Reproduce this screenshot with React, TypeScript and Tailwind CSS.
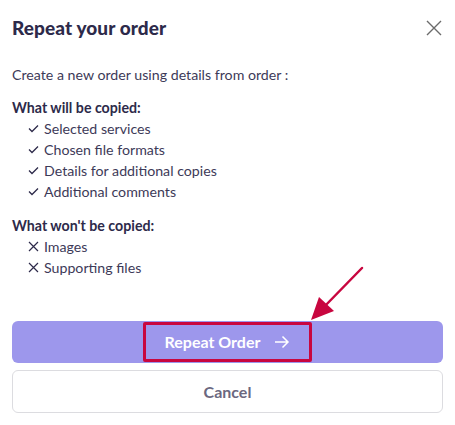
import React from "react";

const Check = () => (
  <svg width="11" height="9" viewBox="0 0 11 9" fill="none" stroke="#2d2a4a" strokeWidth="1.3">
    <path d="M1 4.5 L4 7.5 L10 1.5" />
  </svg>
);
const Cross = () => (
  <svg width="11" height="11" viewBox="0 0 11 11" fill="none" stroke="#2d2a4a" strokeWidth="1.2">
    <path d="M1 1 L10 10 M10 1 L1 10" />
  </svg>
);

export default function App() {
  const copied = ["Selected services", "Chosen file formats", "Details for additional copies", "Additional comments"];
  const notCopied = ["Images", "Supporting files"];
  return (
    <div className="relative w-[455px] h-[425px] bg-white text-[#2d2a4a]" style={{ fontFamily: 'Lato, "Open Sans", sans-serif' }}>
      <div className="px-3 pt-[16px]">
        <div className="flex items-center justify-between h-[24px]">
          <h1 className="text-[19px] tracking-[0.1px]" style={{ fontFamily: 'Lato, sans-serif', fontWeight: 900 }}>Repeat your order</h1>
          <svg width="16" height="16" viewBox="0 0 16 16" className="mr-[1px]" fill="none" stroke="#6b6b6b" strokeWidth="1.4">
            <path d="M1 1 L15 15 M15 1 L1 15" />
          </svg>
        </div>
        <p className="mt-[25px] text-[14.2px] leading-[20px] text-[#3d3a58]">Create a new order using details from order :</p>
        <p className="mt-[13px] text-[14.2px] leading-[20px] font-bold">What will be copied:</p>
        <ul className="ml-[16px]">
          {copied.map((t) => (
            <li key={t} className="flex items-center gap-[5px] h-[21px] leading-[21px] text-[14.2px] text-[#3d3a58]">
              <Check />
              <span>{t}</span>
            </li>
          ))}
        </ul>
        <p className="mt-[14px] text-[14.2px] leading-[20px] font-bold">What won't be copied:</p>
        <ul className="ml-[16px]">
          {notCopied.map((t) => (
            <li key={t} className="flex items-center gap-[5px] h-[21px] leading-[21px] text-[14.2px] text-[#3d3a58]">
              <Cross />
              <span>{t}</span>
            </li>
          ))}
        </ul>
        <div className="mt-[43px] flex flex-col gap-[7px]">
          <button className="h-[42px] w-full rounded-[6px] bg-[#9d97ec] flex items-center justify-center">
            <span className="relative flex items-center justify-center w-[169px] h-[40px] border-[3px] border-[#c8063f] rounded-[2px] text-white font-bold text-[16px] gap-[14px]">
              Repeat Order
              <svg width="16" height="14" viewBox="0 0 16 14" fill="none" stroke="white" strokeWidth="1.5">
                <path d="M1 7 H14 M8.5 1.5 L14 7 L8.5 12.5" />
              </svg>
            </span>
          </button>
          <button className="h-[43px] w-full rounded-[6px] border border-[#dcdce0] bg-white text-[#6b6880] font-bold text-[16px]">
            Cancel
          </button>
        </div>
      </div>
      <svg className="absolute left-0 top-0 pointer-events-none" width="455" height="425">
        <line x1="362" y1="268" x2="322" y2="309" stroke="#c8063f" strokeWidth="2.5" strokeLinecap="round" />
        <polygon points="311,320 319,297 334,311" fill="#c8063f" />
      </svg>
    </div>
  );
}
